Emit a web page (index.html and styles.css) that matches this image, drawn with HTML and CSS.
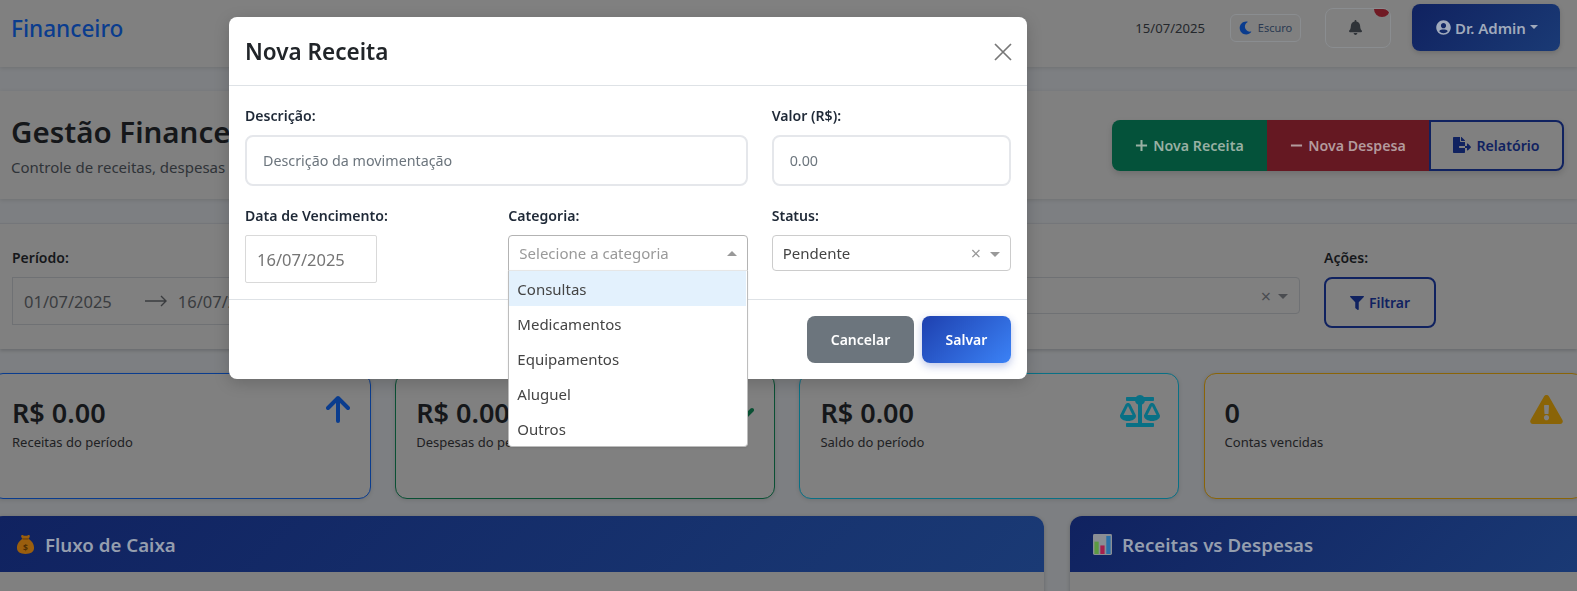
FILE: index.html
```html
<!DOCTYPE html>
<html lang="pt-BR">
<head>
<meta charset="utf-8">
<title>Financeiro</title>
<link rel="stylesheet" href="styles.css">
</head>
<body>
<nav class="navbar">
  <span class="brand">Financeiro</span>
  <div class="nav-right">
    <span class="nav-date">15/07/2025</span>
    <button class="theme-btn"><svg class="ic-moon" viewBox="0 0 512 512"><path d="M283.211 512c78.962 0 151.079-35.925 198.857-94.792 7.068-8.708-.639-21.43-11.562-19.35-124.203 23.654-238.262-71.576-238.262-196.954 0-72.222 38.662-138.635 101.498-174.394 9.686-5.512 7.25-20.197-3.756-22.23A258.156 258.156 0 0 0 283.211 0c-141.309 0-256 114.511-256 256 0 141.309 114.511 256 256 256z"/></svg>Escuro</button>
    <button class="bell-btn"><svg class="ic-bell" viewBox="0 0 448 512"><path d="M224 512c35.32 0 63.97-28.65 63.97-64H160.03c0 35.35 28.65 64 63.97 64zm215.39-149.71c-19.32-20.76-55.47-51.99-55.47-154.29 0-77.7-54.48-139.9-127.94-155.16V32c0-17.67-14.32-32-31.98-32s-31.98 14.33-31.98 32v20.84C118.56 68.1 64.08 130.3 64.08 208c0 102.3-36.15 133.53-55.47 154.29-6 6.45-8.66 14.16-8.61 21.71.11 16.4 12.98 32 32.1 32h383.8c19.12 0 32-15.6 32.1-32 .05-7.55-2.61-15.27-8.61-21.71z"/></svg><span class="badge"></span></button>
    <button class="admin-btn"><svg class="ic-user" viewBox="0 0 496 512"><path d="M248 8C111 8 0 119 0 256s111 248 248 248 248-111 248-248S385 8 248 8zm0 96c48.6 0 88 39.4 88 88s-39.4 88-88 88-88-39.4-88-88 39.4-88 88-88zm0 344c-58.7 0-111.3-26.6-146.5-68.2 18.8-35.4 55.6-59.8 98.5-59.8 2.4 0 4.8.4 7.1 1.1 13 4.2 26.6 6.9 40.9 6.9 14.3 0 28-2.7 40.9-6.9 2.3-.7 4.7-1.1 7.1-1.1 42.9 0 79.7 24.4 98.5 59.8C359.3 421.4 306.7 448 248 448z"/></svg>Dr. Admin<span class="caret"></span></button>
  </div>
</nav>

<header class="page-head">
  <div class="page-titles">
    <h1 class="page-title">Gestão Financeira</h1>
    <p class="page-sub">Controle de receitas, despesas e fluxo de caixa</p>
  </div>
  <div class="btn-group">
    <button class="gbtn gbtn-green"><svg class="ic-sign" viewBox="0 0 14 14"><path d="M7 1v12M1 7h12"/></svg>Nova Receita</button>
    <button class="gbtn gbtn-red"><svg class="ic-sign" viewBox="0 0 14 14"><path d="M1 7h12"/></svg>Nova Despesa</button>
    <button class="gbtn gbtn-outline"><svg class="ic-export" viewBox="0 0 576 512"><path d="M384 121.9c0-6.3-2.5-12.4-7-16.9L279.1 7c-4.5-4.5-10.6-7-17-7H256v128h128zM571 308l-95.7-96.4c-10.1-10.1-27.4-3-27.4 11.3V288h-64v64h64v65.2c0 14.3 17.3 21.4 27.4 11.3L571 332c6.6-6.6 6.6-17.4 0-24zm-379 28v-32c0-8.8 7.2-16 16-16h176V160H248c-13.2 0-24-10.8-24-24V0H24C10.7 0 0 10.7 0 24v464c0 13.3 10.7 24 24 24h336c13.3 0 24-10.7 24-24V352H208c-8.8 0-16-7.2-16-16z"/></svg>Relatório</button>
  </div>
</header>

<section class="filter-card">
  <div class="filter-field filter-period">
    <span class="filter-label">Período:</span>
    <div class="range">
      <span>01/07/2025</span>
      <svg class="ic-range" viewBox="0 0 24 12"><path d="M1 6h21M17 1l5 5-5 5"/></svg>
      <span>16/07/2025</span>
    </div>
  </div>
  <div class="filter-field filter-grow">
    <span class="filter-label">Categoria:</span>
    <div class="filter-select"><span class="clear-x dim">×</span><span class="sel-arrow dim-arrow"></span></div>
  </div>
  <div class="filter-field">
    <span class="filter-label">Ações:</span>
    <button class="filter-btn"><svg class="ic-filter" viewBox="0 0 512 512"><path d="M487.976 0H24.028C2.71 0-8.047 25.866 7.058 40.971L192 225.941V432c0 7.831 3.821 15.17 10.237 19.662l80 55.98C298.02 518.69 320 507.493 320 487.98V225.941l184.947-184.97C520.021 25.896 509.338 0 487.976 0z"/></svg>Filtrar</button>
  </div>
</section>

<section class="stats">
  <article class="stat stat-blue">
    <div><div class="stat-value">R$ 0.00</div><div class="stat-label">Receitas do período</div></div>
    <svg class="ic-arrow" viewBox="0 0 24 28"><path d="M12 26V3M2 13L12 3l10 10"/></svg>
  </article>
  <article class="stat stat-green">
    <div><div class="stat-value">R$ 0.00</div><div class="stat-label">Despesas do período</div></div>
    <svg class="ic-arrow" viewBox="0 0 24 28"><path d="M12 2v23M2 15l10 10 10-10"/></svg>
  </article>
  <article class="stat stat-cyan">
    <div><div class="stat-value">R$ 0.00</div><div class="stat-label">Saldo do período</div></div>
    <svg class="ic-scale" viewBox="0 0 640 512"><path d="M256 336h-.02c0-16.18 1.34-8.73-85.05-181.51-17.65-35.29-68.19-35.36-85.87 0C-2.06 328.75.02 320.33.02 336H0c0 44.18 57.31 80 128 80s128-35.82 128-80zM128 176l72 144H56l72-144zm511.98 160c0-16.18 1.34-8.73-85.05-181.51-17.65-35.29-68.19-35.36-85.87 0-87.12 174.26-85.04 165.84-85.04 181.51H384c0 44.18 57.31 80 128 80s128-35.82 128-80h-.02zM440 320l72-144 72 144H440zm88 128H352V153.25c23.51-10.29 41.16-31.48 46.39-57.25H528c8.84 0 16-7.16 16-16V48c0-8.84-7.16-16-16-16H383.64C369.04 12.68 346.09 0 320 0s-49.04 12.68-63.64 32H112c-8.84 0-16 7.16-16 16v32c0 8.84 7.16 16 16 16h129.61c5.23 25.76 22.87 46.96 46.39 57.25V448H112c-8.84 0-16 7.16-16 16v32c0 8.84 7.16 16 16 16h416c8.84 0 16-7.16 16-16v-32c0-8.84-7.16-16-16-16z"/></svg>
  </article>
  <article class="stat stat-yellow">
    <div><div class="stat-value">0</div><div class="stat-label">Contas vencidas</div></div>
    <svg class="ic-warn" viewBox="0 0 576 512"><path d="M569.517 440.013C587.975 472.007 564.806 512 527.94 512H48.054c-36.937 0-59.999-40.055-41.577-71.987L246.423 23.985c18.467-32.009 64.72-31.951 83.154 0l239.94 416.028zM288 354c-25.405 0-46 20.595-46 46s20.595 46 46 46 46-20.595 46-46-20.595-46-46-46zm-43.673-165.346l7.418 136c.347 6.364 5.609 11.346 11.982 11.346h48.546c6.373 0 11.635-4.982 11.982-11.346l7.418-136c.375-6.874-5.098-12.654-11.982-12.654h-63.383c-6.884 0-12.356 5.78-11.981 12.654z"/></svg>
  </article>
</section>

<section class="charts">
  <article class="chart chart-left">
    <h2 class="chart-head">
      <svg class="ic-emoji" viewBox="0 0 20 22"><path class="bag" d="M7 5C5 3.500 5 1 6.500 1c1 0 1.200.8 3.500.8S12.500 1 13.500 1C15 1 15 3.500 13 5c3.500 2 6 5.500 6 9.500C19 19 15.500 21 10 21S1 19 1 14.500C1 10.500 3.500 7 7 5z"/><path class="bag-tie" d="M7 4.500h6v1.300H7z"/><text class="bag-sign" x="10" y="17.500" text-anchor="middle">$</text></svg>
      Fluxo de Caixa
    </h2>
  </article>
  <article class="chart chart-right">
    <h2 class="chart-head">
      <svg class="ic-emoji" viewBox="0 0 20 22"><rect class="cb-bg" x="0" y="0" width="20" height="22" rx="1.500"/><rect class="cb-green" x="1.500" y="8" width="4.500" height="13"/><rect class="cb-red" x="7.700" y="12" width="4.500" height="9"/><rect class="cb-blue" x="14" y="2" width="4.500" height="19"/></svg>
      Receitas vs Despesas
    </h2>
  </article>
</section>

<div class="modal" role="dialog">
  <div class="modal-head">
    <h3 class="modal-title">Nova Receita</h3>
    <svg class="ic-close" viewBox="0 0 18 18"><path d="M1 1l16 16M17 1L1 17"/></svg>
  </div>
  <div class="modal-body">
    <div class="field field-wide">
      <label class="field-label">Descrição:</label>
      <div class="text-input">Descrição da movimentação</div>
    </div>
    <div class="field">
      <label class="field-label">Valor (R$):</label>
      <div class="text-input">0.00</div>
    </div>
    <div class="field">
      <label class="field-label">Data de Vencimento:</label>
      <div class="date-input">16/07/2025</div>
    </div>
    <div class="field">
      <label class="field-label">Categoria:</label>
      <div class="select select-open">
        <span class="sel-placeholder">Selecione a categoria</span>
        <span class="sel-arrow sel-arrow-up"></span>
        <ul class="dropdown">
          <li class="opt opt-active">Consultas</li>
          <li class="opt">Medicamentos</li>
          <li class="opt">Equipamentos</li>
          <li class="opt">Aluguel</li>
          <li class="opt">Outros</li>
        </ul>
      </div>
    </div>
    <div class="field">
      <label class="field-label">Status:</label>
      <div class="select">
        <span class="sel-value">Pendente</span>
        <span class="clear-x">×</span>
        <span class="sel-arrow"></span>
      </div>
    </div>
  </div>
  <div class="modal-foot">
    <button class="mbtn mbtn-gray">Cancelar</button>
    <button class="mbtn mbtn-blue">Salvar</button>
  </div>
</div>
</body>
</html>
```

FILE: styles.css
```css
* { box-sizing: border-box; }
html, body { margin: 0; height: 100%; }
body {
  overflow: hidden;
  background: #7d7f82;
  font-family: "Noto Sans", "Open Sans", sans-serif;
  color: #15171a;
}
button { font-family: inherit; cursor: pointer; }

/* navbar */
.navbar {
  height: 67px;
  background: #808080;
  box-shadow: 0 1px 4px rgba(0,0,0,.12);
  display: flex;
  align-items: center;
  justify-content: space-between;
  padding: 0 17px 12px 11px;
}
.brand { font-size: 22.600px; font-weight: 500; color: #0a3c8e; position: relative; top: 1px; }
.nav-right { display: flex; align-items: center; }
.nav-date { font-size: 13.100px; color: #24272b; margin-right: 25px; }
.theme-btn {
  width: 71px; height: 28px;
  border: 1px solid #8a8d90; border-radius: 6px;
  background: transparent;
  display: flex; align-items: center; justify-content: center; gap: 6px;
  font-size: 11px; color: #2a3a52; padding: 0;
  margin-right: 24px;
}
.ic-moon { width: 13px; height: 14px; fill: #0a3c8e; }
.bell-btn {
  position: relative;
  width: 66px; height: 40px;
  border: 1px solid #8a8d90; border-radius: 8px;
  background: transparent; padding: 0 6px 0 0;
  margin-right: 21px;
  overflow: hidden;
  display: flex; align-items: center; justify-content: center;
}
.ic-bell { width: 13px; height: 15px; fill: #2f3338; }
.badge {
  position: absolute; top: -8px; right: 0;
  width: 16px; height: 16px; border-radius: 50%;
  background: #701a24;
}
.admin-btn {
  width: 148px; height: 47px;
  border: 0; border-radius: 8px;
  background: linear-gradient(135deg, #102260, #1a3a75);
  box-shadow: 0 2px 5px rgba(0,0,0,.15);
  color: #a0aabc; font-size: 15px; font-weight: 600;
  display: flex; align-items: center; justify-content: center; gap: 4px; padding: 0 0 0 2px;
}
.ic-user { width: 15px; height: 15px; fill: #a0aabc; }
.caret {
  width: 0; height: 0;
  border-left: 4px solid transparent; border-right: 4px solid transparent;
  border-top: 4px solid #a0aabc;
  position: relative; top: -1px;
}

/* page head */
.page-head {
  height: 108px;
  margin-top: 24px;
  background: #808080;
  box-shadow: 0 1px 4px rgba(0,0,0,.12);
  display: flex;
  align-items: center;
  justify-content: space-between;
  padding: 0 13px 0 11px;
}
.page-titles { padding-bottom: 2px; }
.page-title { margin: 0; font-size: 29.500px; font-weight: 600; line-height: 42px; color: #15171a; }
.page-sub { margin: 4px 0 0; font-size: 15px; line-height: 20px; color: #2f3338; white-space: nowrap; }
.btn-group { display: flex; height: 51px; box-shadow: 0 3px 6px rgba(0,0,0,.14); border-radius: 8px; }
.gbtn {
  height: 51px; border: 0; padding: 0;
  display: flex; align-items: center; justify-content: center; gap: 5px;
  font-size: 14.200px; font-weight: 600;
}
.gbtn-green { width: 155px; background: #04523a; color: #98b0a3; border-radius: 8px 0 0 8px; }
.gbtn-red { width: 162px; background: #651822; color: #b39a9d; }
.gbtn-outline { width: 135px; background: transparent; border: 2px solid #102260; color: #102260; border-radius: 0 8px 8px 0; }
.ic-sign { width: 13px; height: 13px; fill: none; stroke: currentColor; stroke-width: 2.200; }
.ic-export { width: 18px; height: 16px; fill: #102260; }

/* filters */
.filter-card {
  height: 126px;
  margin-top: 24px;
  background: #808080;
  border-top: 1px solid #74767a;
  box-shadow: 0 2px 3px rgba(0,0,0,.15);
  display: flex;
  padding: 24px 141px 0 12px;
  gap: 24px;
}
.filter-field { display: flex; flex-direction: column; gap: 9px; }
.filter-label { font-size: 14px; font-weight: 600; line-height: 20px; color: #15171a; }
.filter-period { width: 430px; }
.filter-grow { flex: 1; }
.range {
  height: 48px;
  border: 1px solid #6f7174;
  display: flex; align-items: center;
  padding: 0 11px;
  font-size: 16.500px; color: #3a3c3f;
  gap: 12px;
}
.ic-range { width: 24px; height: 12px; fill: none; stroke: #3a3c3f; stroke-width: 1.400; margin-left: 20px; margin-right: -2px; }
.filter-select {
  height: 37px; border: 1px solid #6f7174; border-radius: 4px;
  display: flex; align-items: center; justify-content: flex-end; padding-right: 11px;
}
.filter-btn {
  width: 112px; height: 51px;
  border: 2px solid #102260; border-radius: 8px;
  background: transparent; color: #102260;
  font-size: 14px; font-weight: 600;
  display: flex; align-items: center; justify-content: center; gap: 5px; padding: 0;
}
.ic-filter { width: 14px; height: 14px; fill: #102260; }
.clear-x.dim { color: #4a4c50; margin-right: 7px; }
.dim-arrow { border-top-color: #4a4c50 !important; }

/* stats */
.stats {
  margin: 24px 0 0 -9px;
  width: 1593px;
  display: grid;
  grid-template-columns: repeat(4, 380px);
  column-gap: 24.200px;
}
.stat {
  height: 126px;
  border: 1px solid;
  border-radius: 12px;
  background: #808080;
  box-shadow: 0 1px 4px rgba(0,0,0,.12);
  padding: 21px 20px 0 20px;
  display: flex;
  justify-content: space-between;
  align-items: flex-start;
}
.stat-blue { border-color: #0a3c8e; color: #0a3c8e; }
.stat-green { border-color: #0a5034; color: #0a5034; }
.stat-cyan { border-color: #097085; color: #097085; }
.stat-yellow { border-color: #8a6407; color: #8a6407; }
.stat-value { font-size: 27px; font-weight: 600; line-height: 36px; color: #15171a; }
.stat-label { font-size: 13px; line-height: 18px; margin-top: 2px; color: #1e2023; }
.ic-arrow { width: 24px; height: 28px; fill: none; stroke: currentColor; stroke-width: 4; stroke-linecap: round; stroke-linejoin: round; }
.ic-scale { width: 40px; height: 32px; fill: currentColor; margin-right: -2px; }
.ic-warn { width: 33px; height: 29px; fill: currentColor; }

/* charts */
.charts {
  margin: 17px 0 0 -9px;
  width: 1600px;
  display: flex;
  gap: 26px;
}
.chart { height: 200px; background: #808080; border-radius: 12px 12px 0 0; box-shadow: 0 1px 4px rgba(0,0,0,.2); }
.chart-left { width: 1053px; }
.chart-right { flex: 1; }
.chart-head {
  margin: 0;
  height: 56px;
  border-radius: 12px 12px 0 0;
  background: linear-gradient(135deg, #102260, #1a3a75);
  color: #959eae;
  font-size: 18.700px; font-weight: 600;
  display: flex; align-items: center; gap: 10px;
  padding-left: 25px;
}
.chart-right .chart-head { padding-left: 23px; }
.ic-emoji { width: 19px; height: 21px; }
.bag { fill: #9a5e0e; }
.bag-tie { fill: #6e4208; }
.bag-sign { font-size: 9px; font-weight: 700; fill: #4e2f05; }
.cb-bg { fill: #8a8e94; }
.cb-green { fill: #5c9a42; }
.cb-red { fill: #a51f4c; }
.cb-blue { fill: #2a70a8; }

/* modal */
.modal {
  position: fixed;
  left: 229px; top: 17px;
  width: 798px; height: 362px;
  background: #fff;
  border-radius: 8px;
  box-shadow: 0 4px 16px rgba(0,0,0,.18);
  display: flex; flex-direction: column;
}
.modal-head {
  height: 69px; flex: none;
  border-bottom: 1px solid #dee2e6;
  display: flex; align-items: center; justify-content: space-between;
  padding: 0 15px 0 16px;
}
.modal-title { margin: 0; font-size: 22.500px; font-weight: 600; color: #212529; }
.ic-close { width: 18px; height: 18px; fill: none; stroke: #777; stroke-width: 1.700; margin-top: 1px; }
.modal-body {
  height: 214px; flex: none;
  display: grid;
  grid-template-columns: repeat(3, 1fr);
  grid-auto-rows: min-content;
  column-gap: 24px;
  row-gap: 20px;
  padding: 20px 16px 0;
  border-bottom: 1px solid #dee2e6;
}
.field-wide { grid-column: span 2; }
.field-label { display: block; font-size: 14.100px; font-weight: 600; line-height: 20px; color: #1f2937; margin-bottom: 9px; }
.text-input {
  height: 51px;
  border: 2px solid #e5e7eb; border-radius: 8px;
  display: flex; align-items: center;
  padding: 0 16px;
  font-size: 14.300px; color: #6c757d;
}
.date-input {
  width: 132px; height: 48px;
  border: 1px solid #d9d9d9; border-radius: 2px;
  display: flex; align-items: center;
  padding: 0 11px;
  font-size: 16.500px; color: #757575;
}
.select {
  position: relative;
  height: 36px;
  border: 1px solid #ccc; border-radius: 4px;
  display: flex; align-items: center;
  padding: 0 10px;
  font-size: 15px; color: #333;
}
.select-open { border-color: #b3b3b3; border-radius: 4px 4px 0 0; }
.sel-placeholder { color: #999; flex: 1; }
.sel-value { flex: 1; color: #444; }
.clear-x { color: #999; font-size: 18px; line-height: 1; margin-right: 9px; }
.sel-arrow {
  width: 0; height: 0;
  border-left: 5px solid transparent; border-right: 5px solid transparent;
  border-top: 5px solid #999;
  margin-top: 2px;
}
.sel-arrow-up { border-top: 0; border-bottom: 5px solid #999; margin-top: 0; }
.dropdown {
  position: absolute;
  left: -1px; right: -1px; top: 34px;
  z-index: 2;
  margin: 0; padding: 0;
  list-style: none;
  background: #fff;
  border: 1px solid #bdbdbd; border-top-color: #e6e6e6; border-radius: 0 0 4px 4px;
  box-shadow: 0 1px 2px rgba(0,0,0,.1);
}
.opt { height: 35px; display: flex; align-items: center; padding: 0 8px; font-size: 15px; color: #444; }
.opt-active { background: #e3f1fd; margin-right: 1px; }
.modal-foot {
  flex: 1;
  display: flex; justify-content: flex-end; gap: 8px;
  padding: 16px 16px 0 0;
}
.mbtn {
  height: 47px; border: 0; border-radius: 8px;
  color: #fff; font-size: 14px; font-weight: 600; padding: 0;
}
.mbtn-gray { width: 107px; background: #6c757d; }
.mbtn-blue { width: 89px; background: linear-gradient(135deg, #1e40af, #3b82f6); box-shadow: 0 3px 8px rgba(30,64,175,.3); }
```
